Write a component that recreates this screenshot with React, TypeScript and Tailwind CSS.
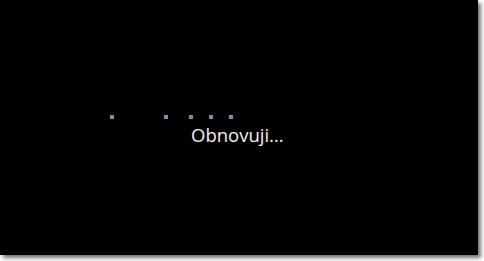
export default function App() {
  const dots = [110, 164, 189, 209, 229];
  return (
    <div className="w-[484px] h-[261px] bg-white">
      <div className="relative w-[478px] h-[255px] bg-black shadow-[3px_3px_4px_rgba(0,0,0,0.55)]">
        {/* progress dots */}
        {dots.map((x) => (
          <span
            key={x}
            className="absolute top-[115px] w-[4px] h-[4px] bg-[#7890a6]"
            style={{ left: x }}
          />
        ))}
        <p
          className="absolute left-[191px] top-[123px] text-[18.5px] leading-[24px] text-[#f0f0f0]"
          style={{ fontFamily: '"Open Sans", "Noto Sans", sans-serif' }}
        >
          Obnovuji...
        </p>
      </div>
    </div>
  );
}
